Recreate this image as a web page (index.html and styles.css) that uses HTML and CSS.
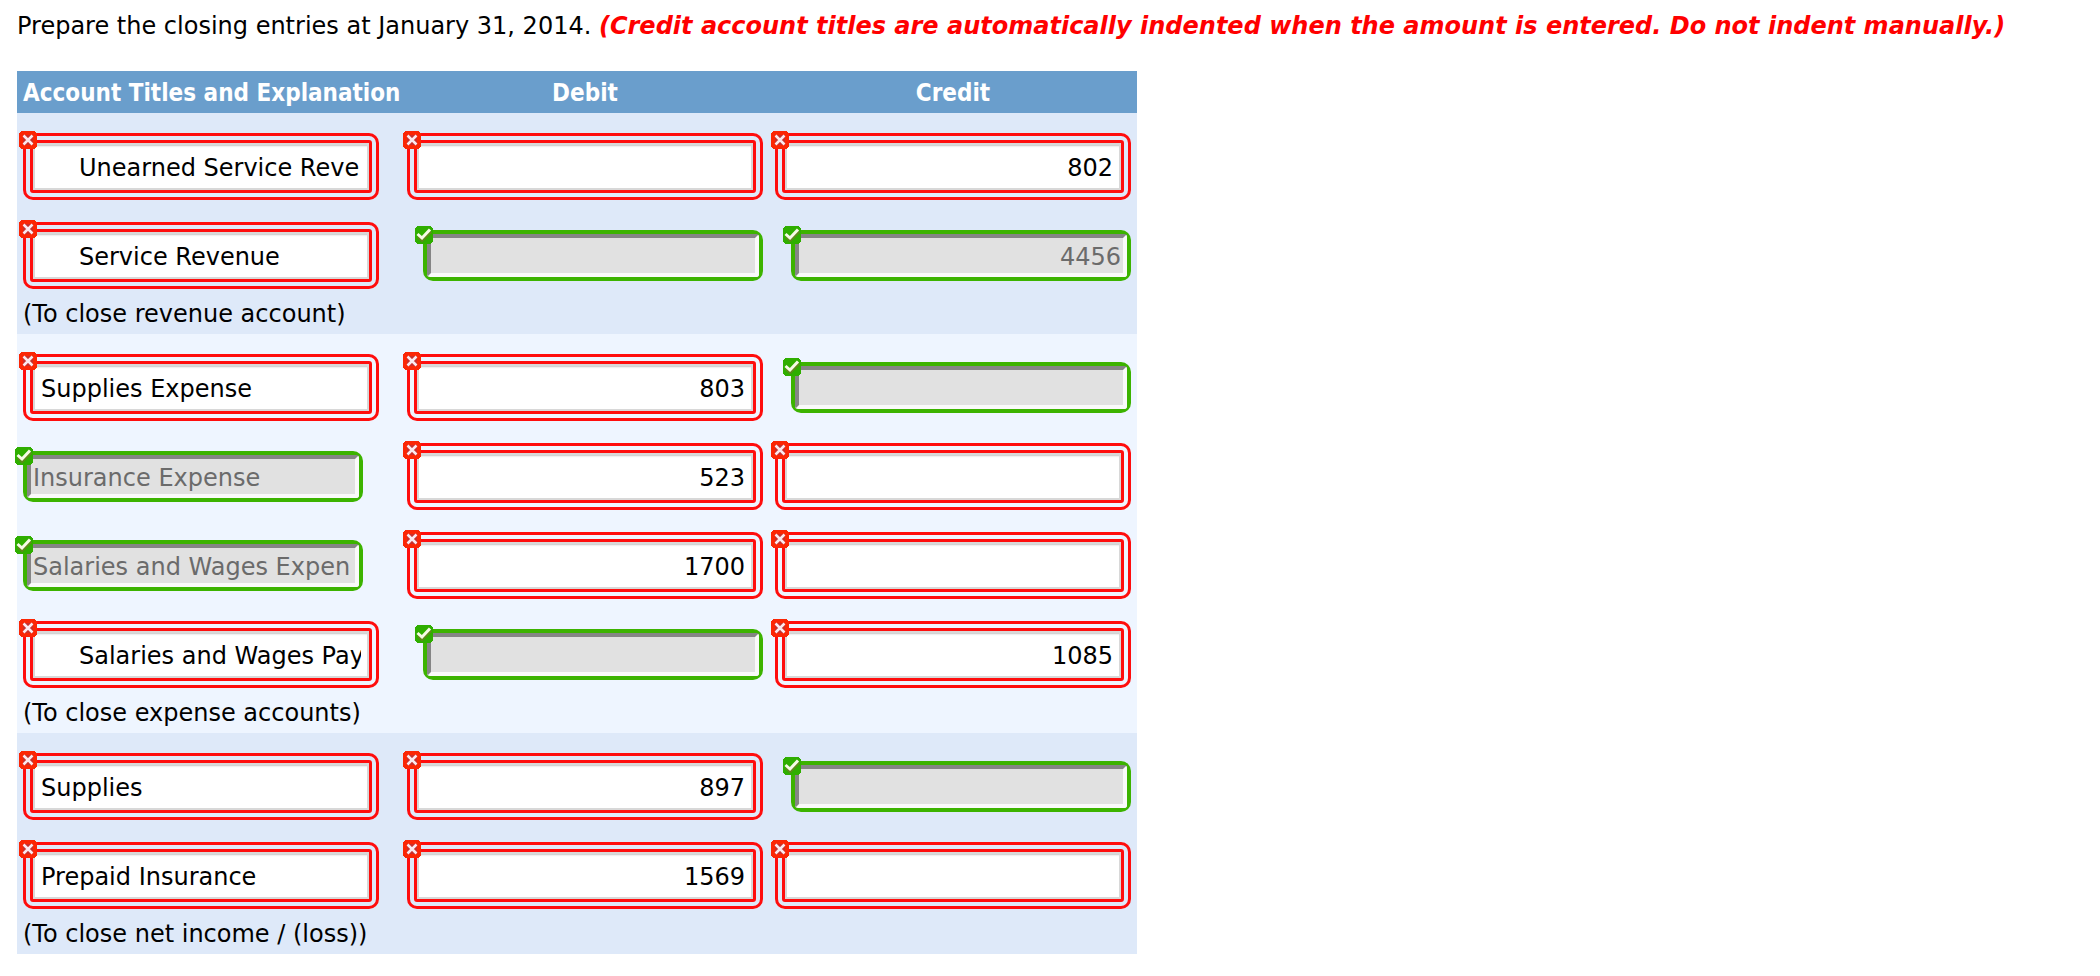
FILE: index.html
```html
<!DOCTYPE html>
<html lang="en">
<head>
    <meta charset="utf-8" />
    <meta name="viewport" content="width=device-width, initial-scale=1.0" />
    <title>Closing Entries</title>
    <link rel="stylesheet" href="styles.css">
</head>
<body>

    <svg class="sprite" aria-hidden="true">
        <symbol id="cross" viewBox="0 0 18 18">
            <path fill="#fb2605" d="M2 0h14v1h1v1h1v14h-1v1h-1v1H2v-1H1v-1H0V2h1V1h1z" />
            <path fill="#c9302b" d="M4 4h10v10H4z" />
            <path stroke="#fbeaf0" stroke-width="2.500" d="M4.500 4.500l9 9M13.500 4.500l-9 9" />
        </symbol>
        <symbol id="check" viewBox="0 0 18 18">
            <path fill="#2fae00" d="M2 0h14v1h1v1h1v14h-1v1h-1v1H2v-1H1v-1H0V2h1V1h1z" />
            <path fill="none" stroke="#5f8a1c" stroke-width="3" d="M3 10.500l4 4 9-9" />
            <path fill="none" stroke="#f7fbe6" stroke-width="3" d="M2.500 8l4.500 4 8-8.500" />
        </symbol>
    </svg>

    <p class="intro">Prepare the closing entries at January 31, 2014. <strong>(Credit account titles are automatically indented when the amount is entered. Do not indent manually.)</strong></p>

    <form>
        <table>
            <thead>
                <tr>
                    <th class="account">Account Titles and Explanation</th>
                    <th>Debit</th>
                    <th>Credit</th>
                </tr>
            </thead>
            <tbody>
                <tr>
                    <td><span class="field wrong"><input type="text" class="indent" value="Unearned Service Reve" aria-label="Account 1" /><svg><use href="#cross" /></svg></span></td>
                    <td><span class="field wrong"><input type="text" value="" aria-label="Debit 1" /><svg><use href="#cross" /></svg></span></td>
                    <td><span class="field wrong"><input type="text" value="802" aria-label="Credit 1" /><svg><use href="#cross" /></svg></span></td>
                </tr>
                <tr>
                    <td><span class="field wrong"><input type="text" class="indent" value="Service Revenue" aria-label="Account 2" /><svg><use href="#cross" /></svg></span></td>
                    <td><span class="field right"><input type="text" value="" aria-label="Debit 2" disabled /><svg><use href="#check" /></svg></span></td>
                    <td><span class="field right"><input type="text" value="4456" aria-label="Credit 2" disabled /><svg><use href="#check" /></svg></span></td>
                </tr>
                <tr class="note">
                    <td colspan="3">(To close revenue account)</td>
                </tr>
            </tbody>
            <tbody>
                <tr>
                    <td><span class="field wrong"><input type="text" value="Supplies Expense" aria-label="Account 3" /><svg><use href="#cross" /></svg></span></td>
                    <td><span class="field wrong"><input type="text" value="803" aria-label="Debit 3" /><svg><use href="#cross" /></svg></span></td>
                    <td><span class="field right"><input type="text" value="" aria-label="Credit 3" disabled /><svg><use href="#check" /></svg></span></td>
                </tr>
                <tr>
                    <td><span class="field right"><input type="text" value="Insurance Expense" aria-label="Account 4" disabled /><svg><use href="#check" /></svg></span></td>
                    <td><span class="field wrong"><input type="text" value="523" aria-label="Debit 4" /><svg><use href="#cross" /></svg></span></td>
                    <td><span class="field wrong"><input type="text" value="" aria-label="Credit 4" /><svg><use href="#cross" /></svg></span></td>
                </tr>
                <tr>
                    <td><span class="field right"><input type="text" value="Salaries and Wages Expen" aria-label="Account 5" disabled /><svg><use href="#check" /></svg></span></td>
                    <td><span class="field wrong"><input type="text" value="1700" aria-label="Debit 5" /><svg><use href="#cross" /></svg></span></td>
                    <td><span class="field wrong"><input type="text" value="" aria-label="Credit 5" /><svg><use href="#cross" /></svg></span></td>
                </tr>
                <tr>
                    <td><span class="field wrong"><input type="text" class="indent" value="Salaries and Wages Payable" aria-label="Account 6" /><svg><use href="#cross" /></svg></span></td>
                    <td><span class="field right"><input type="text" value="" aria-label="Debit 6" disabled /><svg><use href="#check" /></svg></span></td>
                    <td><span class="field wrong"><input type="text" value="1085" aria-label="Credit 6" /><svg><use href="#cross" /></svg></span></td>
                </tr>
                <tr class="note">
                    <td colspan="3">(To close expense accounts)</td>
                </tr>
            </tbody>
            <tbody>
                <tr>
                    <td><span class="field wrong"><input type="text" value="Supplies" aria-label="Account 7" /><svg><use href="#cross" /></svg></span></td>
                    <td><span class="field wrong"><input type="text" value="897" aria-label="Debit 7" /><svg><use href="#cross" /></svg></span></td>
                    <td><span class="field right"><input type="text" value="" aria-label="Credit 7" disabled /><svg><use href="#check" /></svg></span></td>
                </tr>
                <tr>
                    <td><span class="field wrong"><input type="text" value="Prepaid Insurance" aria-label="Account 8" /><svg><use href="#cross" /></svg></span></td>
                    <td><span class="field wrong"><input type="text" value="1569" aria-label="Debit 8" /><svg><use href="#cross" /></svg></span></td>
                    <td><span class="field wrong"><input type="text" value="" aria-label="Credit 8" /><svg><use href="#cross" /></svg></span></td>
                </tr>
                <tr class="note">
                    <td colspan="3">(To close net income / (loss))</td>
                </tr>
            </tbody>
        </table>
    </form>

</body>
</html>
```

FILE: styles.css
```css
body {
    font-family: Verdana, "DejaVu Sans", sans-serif;
    font-size: 24px;
    line-height: 30px;
    color: #000;
    background-color: #fff;
    margin: 0;
    padding: 11px 17px;
}

.sprite {
    display: none;
}

.intro {
    margin: 0 0 30px;
}

.intro strong {
    color: #f00;
    font-style: italic;
}

table {
    width: 1120px;
    max-width: 100%;
    table-layout: fixed;
    border-collapse: collapse;
}

th {
    height: 40px;
    padding: 2px 6px 0;
    background-color: #6a9ecc;
    color: #fff;
    font-family: Tahoma, "DejaVu Sans Condensed", sans-serif;
    text-align: center;
}

th.account {
    width: 372px;
    text-align: left;
    white-space: nowrap;
}

tbody {
    background-color: #dee9f9;
}

tbody:nth-of-type(even) {
    background-color: #eef5ff;
}

td {
    height: 67px;
    padding: 20px 6px 2px;
    text-align: right;
    vertical-align: middle;
}

td:first-child {
    text-align: left;
}

.note td {
    height: 41px;
    padding: 2px 6px 0;
}

.field {
    position: relative;
    display: inline-block;
    vertical-align: middle;
    box-sizing: border-box;
    max-width: 100%;
}

.field input {
    display: block;
    box-sizing: border-box;
    width: 100%;
    margin: 0;
    font: inherit;
    color: #000;
    text-align: right;
}

td:first-child input {
    text-align: left;
}

.field input.indent {
    text-indent: 38px;
}

.field svg {
    position: absolute;
    width: 18px;
    height: 18px;
}

.wrong {
    width: 356px;
}

.wrong input {
    height: 67px;
    padding: 2px 8px 0;
    border: 10px double #ff0d0d;
    border-radius: 10px;
    background-color: #fff;
    background-clip: padding-box;
    box-shadow: inset 0 0 0 2px #d8d8d8, inset 0 3px 2px #c4c4c4;
}

.wrong svg {
    top: -2px;
    left: -4px;
}

.right {
    width: 340px;
    border: 4px solid #3cb300;
    border-radius: 10px;
    background-color: #3cb300;
}

.right input {
    height: 43px;
    padding: 2px 2px 0;
    border: 4px solid;
    border-color: #858585 #fafafa #fafafa #858585;
    border-radius: 3px;
    background-color: #e1e1e1;
    color: #6b6b6b;
}

.right svg {
    top: -8px;
    left: -12px;
}
```
